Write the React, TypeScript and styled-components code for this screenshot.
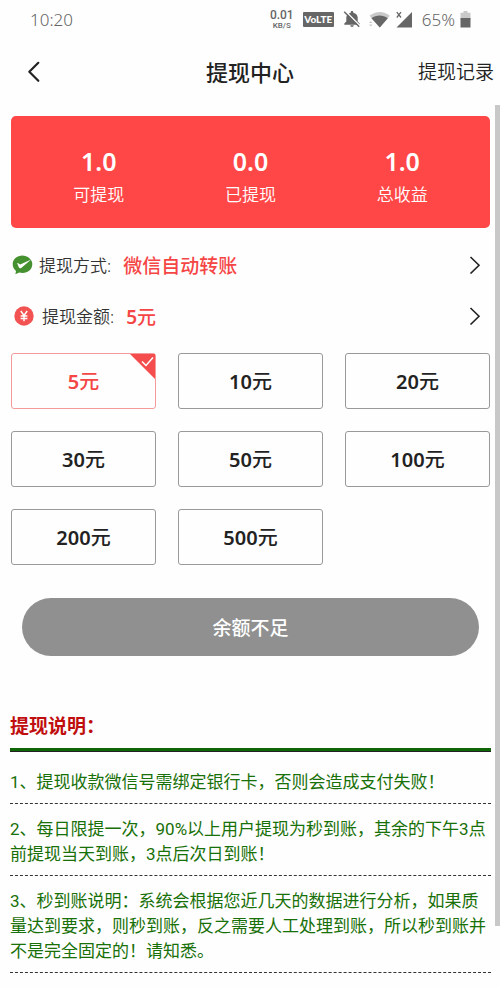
import React, { useState } from "react";
import styled, { createGlobalStyle } from "styled-components";

const GlobalStyle = createGlobalStyle`
  *, *::before, *::after { box-sizing: border-box; }
  body {
    margin: 0;
    background: #fefefe;
    color: #222;
    font-family: "Noto Sans", "Noto Sans CJK SC", sans-serif;
  }
  button { font-family: inherit; color: inherit; cursor: pointer; }
  h1, h2, p, ol, dl, dd, dt { margin: 0; padding: 0; }
`;

const Page = styled.div`
  display: flex;
  flex-direction: column;
  min-height: 100vh;
`;

const StatusBar = styled.div`
  display: flex;
  align-items: center;
  justify-content: space-between;
  height: 38px;
  padding: 0 29px 0 30px;
  color: #666;
  font-size: 17px;
  font-weight: 300;
`;

const StatusGroup = styled.div`
  display: flex;
  align-items: center;
`;

const Speed = styled.span`
  display: flex;
  flex-direction: column;
  align-items: center;
  width: 24px;
  margin-right: 9px;
  font-family: Roboto, sans-serif;
  font-weight: 500;
`;

const SpeedValue = styled.span`
  font-size: 12px;
  line-height: 12px;
`;

const SpeedUnit = styled.span`
  font-size: 8px;
  line-height: 9px;
`;

const Volte = styled.span`
  width: 31px;
  margin-right: 9px;
  border-radius: 1px;
  background: #666;
  color: #fefefe;
  font-family: Lato, sans-serif;
  font-size: 10px;
  font-weight: 900;
  line-height: 15px;
  text-align: center;
`;

const StatusIcon = styled.svg<{ $gap: number }>`
  display: block;
  flex: none;
  margin-right: ${(p) => p.$gap}px;
`;

const BatteryLevel = styled.span`
  margin-right: 5px;
`;

const Header = styled.header`
  display: grid;
  grid-template-columns: 1fr auto 1fr;
  align-items: center;
  height: 67px;
  padding: 0 6px;
`;

const BackButton = styled.button`
  justify-self: start;
  display: flex;
  padding: 4px 14px;
  border: 0;
  background: none;
`;

const Title = styled.h1`
  font-size: 22px;
  font-weight: 500;
  line-height: 32px;
`;

const RecordsLink = styled.a`
  justify-self: end;
  color: #222;
  font-size: 19px;
  font-weight: 350;
  line-height: 28px;
  text-decoration: none;
`;

const Body = styled.main`
  position: relative;
  flex: 1;
  padding: 11px 10px 0 11px;
`;

const ScrollThumb = styled.div`
  position: absolute;
  top: 0;
  right: 0;
  width: 5px;
  height: 93%;
  background: #c8c8c8;
`;

const Summary = styled.dl`
  display: grid;
  grid-template-columns: repeat(3, 1fr);
  align-items: center;
  height: 112px;
  padding: 10px 12px 0;
  border-radius: 5px;
  background: #ff4747;
  color: #fff;
  text-align: center;
`;

const Stat = styled.div`
  display: flex;
  flex-direction: column-reverse;
`;

const StatValue = styled.dd`
  font-size: 25px;
  font-weight: 600;
  line-height: 36px;
`;

const StatLabel = styled.dt`
  font-size: 17px;
  font-weight: 350;
  line-height: 32px;
`;

const Options = styled.div`
  padding: 11px 0 12px;
`;

const OptionRow = styled.button`
  display: flex;
  align-items: center;
  width: 100%;
  height: 51px;
  padding: 0 9px 0 1px;
  border: 0;
  background: none;
  text-align: left;
`;

const OptionLabel = styled.span`
  margin: 0 12px 0 6px;
  color: #333;
  font-size: 17px;
  font-weight: 350;
`;

const OptionValue = styled.span`
  flex: 1;
  color: #f54646;
  font-size: 19px;
  font-weight: 500;
`;

const MoneyIcon = styled.svg`
  margin: 0 2px;
`;

const AmountGrid = styled.div`
  display: grid;
  grid-template-columns: repeat(3, 1fr);
  gap: 22px;
`;

const Amount = styled.button<{ $active: boolean }>`
  position: relative;
  height: 56px;
  padding: 0 0 2px;
  border: 1px solid ${(p) => (p.$active ? "#f49a9a" : "#999")};
  border-radius: 3px;
  background: #fefefe;
  color: ${(p) => (p.$active ? "#f54646" : "#222")};
  font-size: 20px;
  font-weight: 500;
`;

const Digits = styled.span`
  font-weight: 600;
`;

const Corner = styled.svg`
  position: absolute;
  top: 0;
  right: 0;
`;

const Submit = styled.button`
  display: block;
  width: calc(100% - 22px);
  height: 58px;
  margin: 33px auto 0;
  border: 0;
  border-radius: 29px;
  background: #909090;
  color: #fff;
  font-size: 19px;
  font-weight: 500;
`;

const Notes = styled.section`
  margin: 56px -1px 0;
  font-family: Roboto, "Noto Sans CJK SC", sans-serif;
`;

const NotesTitle = styled.h2`
  padding-bottom: 6px;
  border-bottom: 3px solid #0f6606;
  box-shadow: 0 1px 0 #222;
  color: #c00d0d;
  font-size: 19px;
  font-weight: 700;
  line-height: 30px;
`;

const NoteList = styled.ol`
  padding-top: 6px;
  list-style: none;
`;

const Note = styled.li`
  padding: 13px 0 8px;
  border-bottom: 1px dashed #333;
  color: #187008;
  font-size: 17px;
  line-height: 25px;
`;

const STATS = [
  ["可提现", "1.0"],
  ["已提现", "0.0"],
  ["总收益", "1.0"],
];

const AMOUNTS = [5, 10, 20, 30, 50, 100, 200, 500];

const NOTES = [
  "1、提现收款微信号需绑定银行卡，否则会造成支付失败！",
  "2、每日限提一次，90%以上用户提现为秒到账，其余的下午3点前提现当天到账，3点后次日到账！",
  "3、秒到账说明：系统会根据您近几天的数据进行分析，如果质量达到要求，则秒到账，反之需要人工处理到账，所以秒到账并不是完全固定的！请知悉。",
];

const RowArrow = () => (
  <svg width="12" height="18" viewBox="0 0 12 18" fill="none" stroke="#222" strokeWidth="1.6" aria-hidden="true">
    <path d="M1.5 1 10 9.3 1.5 17.5" />
  </svg>
);

const StatusIcons = () => (
  <>
    <StatusIcon $gap={8} width="18" height="18" viewBox="0 0 18 18" aria-hidden="true">
      <path fill="#666" d="M9 1c.8 0 1.300.5 1.300 1.300v.5c2.700.6 4.400 2.500 4.400 5v3.700l2 2v1.200H1.300v-1.200l2-2V7.800c0-2.500 1.700-4.400 4.400-5v-.5C7.700 1.500 8.200 1 9 1zM7.200 15.300h3.600A1.800 1.800 0 0 1 7.200 15.300z" />
      <path d="M2.300 1 17.300 16" stroke="#fefefe" strokeWidth="1.500" />
      <path d="M1.200 1.800 16.200 16.800" stroke="#666" strokeWidth="1.400" />
    </StatusIcon>
    <StatusIcon $gap={5} width="21" height="17" viewBox="0 0 21 17" aria-hidden="true">
      <path fill="#c9c9c9" d="M.5 4.800C6.500-.3 15-.3 20.800 4.800L10.800 16.500z" />
      <path fill="#666" d="M2.400 7.300C7.200 3.600 14 3.600 18.800 7.300L10.800 16.500z" />
      <path fill="#fefefe" d="M0 9h3.600l4 8H0z" />
      <path fill="#c9c9c9" d="M1.800 10 3.500 12H0zM1.800 15.500 3.500 13.500H0z" />
    </StatusIcon>
    <StatusIcon $gap={9} width="18" height="17" viewBox="0 0 18 17" aria-hidden="true">
      <path fill="#666" d="M17 1v15.500H1.500z" />
      <path d="M1.800 1.200 6 6.500M6 1.200 1.800 6.500" stroke="#666" strokeWidth="1.300" />
    </StatusIcon>
  </>
);

export default function App() {
  const [selected, setSelected] = useState(5);

  return (
    <>
      <GlobalStyle />
      <Page>
        <StatusBar>
          <span>10:20</span>
          <StatusGroup>
            <Speed>
              <SpeedValue>0.01</SpeedValue>
              <SpeedUnit>KB/S</SpeedUnit>
            </Speed>
            <Volte>VoLTE</Volte>
            <StatusIcons />
            <BatteryLevel>65%</BatteryLevel>
            <StatusIcon $gap={0} width="11" height="17" viewBox="0 0 11 17" aria-hidden="true">
              <path fill="#c9c9c9" d="M3.500 0h4v1.800H10.500V9H.5V1.800h3z" />
              <path fill="#666" d="M.5 7h10v9.500H.5z" />
            </StatusIcon>
          </StatusGroup>
        </StatusBar>

        <Header>
          <BackButton type="button" aria-label="返回">
            <svg width="20" height="22" viewBox="0 0 20 22" fill="none" stroke="#222" strokeWidth="2.2" strokeLinecap="round" strokeLinejoin="round" aria-hidden="true">
              <path d="M18.300 1.800 9.300 10.800l9 9" />
            </svg>
          </BackButton>
          <Title>提现中心</Title>
          <RecordsLink href="#records">提现记录</RecordsLink>
        </Header>

        <Body>
          <Summary>
            {STATS.map(([label, value]) => (
              <Stat key={label}>
                <StatLabel>{label}</StatLabel>
                <StatValue>{value}</StatValue>
              </Stat>
            ))}
          </Summary>

          <Options>
            <OptionRow type="button">
              <svg width="21" height="20" viewBox="0 0 21 20" aria-hidden="true">
                <path fill="#45902f" d="M10.500.5C4.900.5.7 4.400.7 9.200c0 2.800 1.200 5 3.300 6.700L3.400 19.300l3.900-1.800c1 .3 2.100.4 3.200.4 5.600 0 9.800-3.800 9.800-8.700 0-1.200-.2-2.300-.7-3.300C17.800 2.700 14.500.5 10.500.5z" />
                <path fill="#fff" d="M5.200 8.200c.7-.6 1.600.6 3 1.200L19.200 4.600 9.500 12.700c-1.100.9-2.200.7-2.700-.5z" />
              </svg>
              <OptionLabel>提现方式:</OptionLabel>
              <OptionValue>微信自动转账</OptionValue>
              <RowArrow />
            </OptionRow>
            <OptionRow type="button">
              <MoneyIcon width="20" height="20" viewBox="0 0 20 20" aria-hidden="true">
                <circle cx="10" cy="10" r="9.700" fill="#f25252" />
                <path d="M6.800 5 10 9.500 13.200 5M10 9.500V15.200M6.600 10h6.800M6.600 12.500h6.800" fill="none" stroke="#fff" strokeWidth="1.400" />
              </MoneyIcon>
              <OptionLabel>提现金额:</OptionLabel>
              <OptionValue>
                <Digits>{selected}</Digits>元
              </OptionValue>
              <RowArrow />
            </OptionRow>
          </Options>

          <AmountGrid>
            {AMOUNTS.map((amount) => (
              <Amount
                key={amount}
                type="button"
                $active={amount === selected}
                aria-pressed={amount === selected}
                onClick={() => setSelected(amount)}
              >
                <Digits>{amount}</Digits>元
                {amount === selected && (
                  <Corner width="25" height="25" viewBox="0 0 25 25" aria-hidden="true">
                    <path fill="#f54d4d" d="M0 0h25v25z" />
                    <path d="M12 7.500 16 11.500 23 3.500" fill="none" stroke="#fff" strokeWidth="1.500" />
                  </Corner>
                )}
              </Amount>
            ))}
          </AmountGrid>

          <Submit type="button">余额不足</Submit>

          <Notes>
            <NotesTitle>提现说明：</NotesTitle>
            <NoteList>
              {NOTES.map((note) => (
                <Note key={note}>{note}</Note>
              ))}
            </NoteList>
          </Notes>
          <ScrollThumb aria-hidden="true" />
        </Body>
      </Page>
    </>
  );
}
